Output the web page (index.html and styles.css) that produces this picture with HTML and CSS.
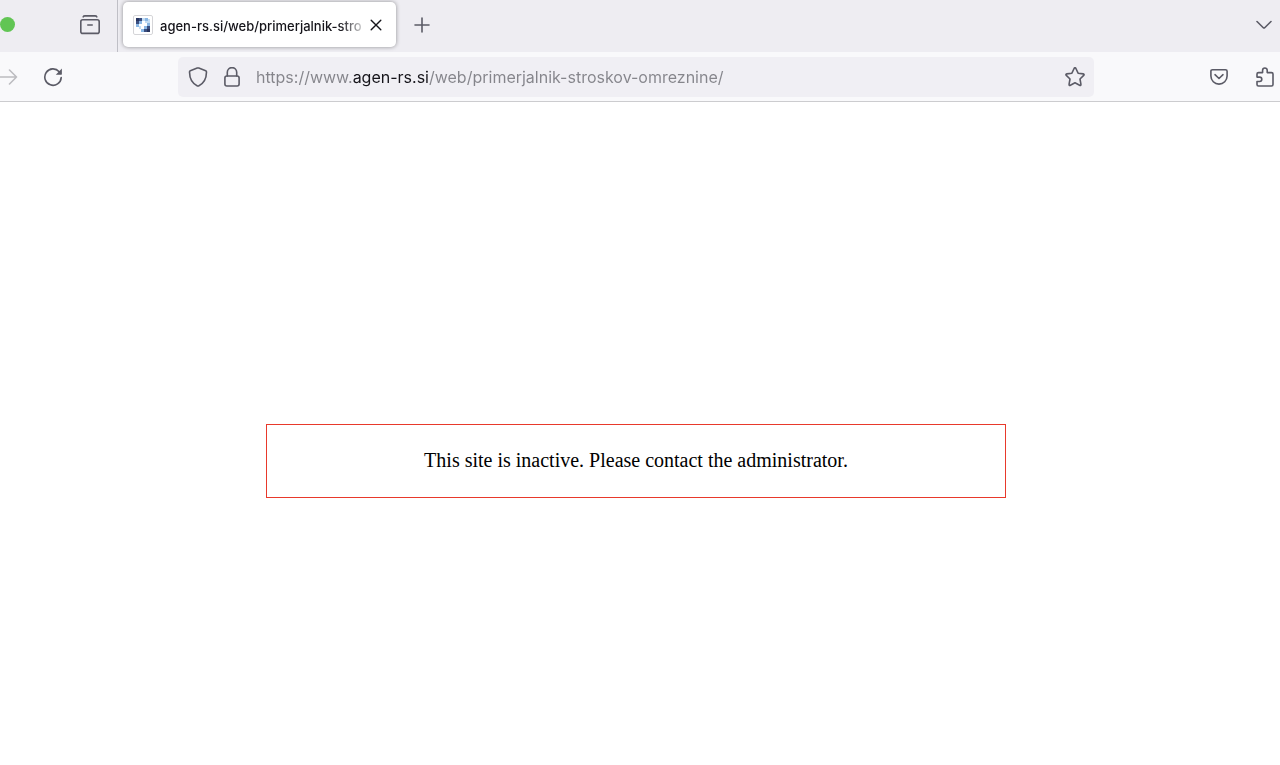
FILE: index.html
```html
<!DOCTYPE html>
<html lang="en">
<head>
    <meta charset="UTF-8">
    <meta name="viewport" content="width=device-width, initial-scale=1.0">
    <title>agen-rs.si/web/primerjalnik-stroskov-omreznine</title>
    <link rel="stylesheet" href="styles.css">
</head>
<body>
    <!-- Tab strip -->
    <header class="tab-strip">
        <div class="window-side">
            <button class="window-dot" aria-label="Zoom window"></button>
            <button class="icon-button" aria-label="Firefox View">
                <svg width="20" height="20" viewBox="0 0 20 20">
                    <path d="M3.2 1.8Q3.6 .9 5 .9h10q1.4 0 1.8.9"/>
                    <rect x=".8" y="4.8" width="18.4" height="13.6" rx="2"/>
                    <path d="M7.8 10h4.4"/>
                </svg>
            </button>
        </div>

        <div class="tab">
            <svg class="favicon" width="20" height="20" viewBox="0 0 20 20">
                <rect class="favicon-frame" x=".5" y=".5" width="19" height="19" rx="1.5"/>
                <path fill="#3b4f80" d="M3 3h6v3H6v3H3zM14 11h3v6h-6v-3h3z"/>
                <path fill="#27345e" d="M3 3h3v3H3zM14 14h3v3h-3z"/>
                <path fill="#8bb8e5" d="M6 6h3v3H6zM12 3h3v3h-3zM3 9h3v3H3zM14 8h3v3h-3zM11 11h3v3h-3zM8 14h3v3H8z"/>
                <path fill="#c4ddf3" d="M9 3h3v3H9zM15 4h2v4h-2zM12 6h3v2h-3zM6 11h2v3H6z"/>
            </svg>
            <span class="tab-title">agen-rs.si/web/primerjalnik-stro</span>
            <button class="icon-button tab-close" aria-label="Close tab">
                <svg width="12" height="12" viewBox="0 0 12 12">
                    <path d="M1.2 1.2l9.6 9.6M10.8 1.2l-9.6 9.6"/>
                </svg>
            </button>
        </div>

        <button class="icon-button new-tab" aria-label="New tab">
            <svg width="16" height="16" viewBox="0 0 16 16">
                <path d="M8 1v14M1 8h14"/>
            </svg>
        </button>
        <button class="icon-button list-tabs" aria-label="List all tabs">
            <svg width="16" height="16" viewBox="0 0 16 16">
                <path d="M1 4.5l6.3 6.2q.7.6 1.4 0L15 4.5"/>
            </svg>
        </button>
    </header>

    <!-- Navigation toolbar -->
    <nav class="toolbar">
        <div class="nav-buttons">
            <button class="icon-button" aria-label="Forward" disabled>
                <svg width="18" height="18" viewBox="0 0 18 18">
                    <path d="M0 9h16.5M9.5 2l7 7-7 7"/>
                </svg>
            </button>
            <button class="icon-button" aria-label="Reload">
                <svg width="20" height="20" viewBox="0 0 20 20">
                    <path d="M16.2 4.7A8.2 8.2 0 1 0 18.2 10.600"/>
                    <path class="solid" d="M18.9 1.6v5.500q0 .6-.6.6h-5.500z"/>
                </svg>
            </button>
        </div>

        <form class="address-bar">
            <button type="button" class="icon-button" aria-label="Tracking protection">
                <svg width="20" height="20" viewBox="0 0 20 20">
                    <path d="M10 .9q.4 0 .8.2l6.9 2.7q.8.3.8 1.2C18.4 11.5 15.2 16.8 10.6 18.9q-.6.3-1.2 0C4.8 16.8 1.6 11.5 1.5 5q0-.9.8-1.2l6.9-2.7q.4-.2.8-.2z"/>
                </svg>
            </button>
            <button type="button" class="icon-button" aria-label="Connection secure">
                <svg width="16" height="20" viewBox="0 0 16 20">
                    <path d="M3.3 9V5.3a4.7 4.7 0 0 1 9.4 0V9"/>
                    <rect x=".9" y="9" width="14.2" height="10" rx="2"/>
                </svg>
            </button>
            <input class="address" type="text" aria-label="Address" spellcheck="false" value="https://www.agen-rs.si/web/primerjalnik-stroskov-omreznine/">
            <button type="button" class="icon-button" aria-label="Bookmark this page">
                <svg width="20" height="20" viewBox="0 0 20 20">
                    <path d="M9.1 1.5q.9-1.5 1.8 0l2.2 4.7 5.1.7q1.5.3.5 1.5l-3.7 3.6.9 5.2q.1 1.6-1.3 1L10 15.8l-4.6 2.4q-1.4.6-1.3-1l.9-5.2L1.3 8.4q-1-1.2.5-1.5l5.1-.7z"/>
                </svg>
            </button>
        </form>

        <div class="extensions">
            <button class="icon-button" aria-label="Save to Pocket">
                <svg width="18" height="18" viewBox="0 0 18 18">
                    <path d="M2.5 1.7h13q1.6 0 1.6 1.6V8a8.1 8.1 0 0 1-16.2 0V3.3q0-1.6 1.6-1.6z"/>
                    <path d="M5 6.7l4 3.8 4-3.8"/>
                </svg>
            </button>
            <button class="icon-button" aria-label="Extensions">
                <svg width="18" height="20" viewBox="0 0 18 20">
                    <path d="M2.5 5.6h4.1V3.3a2.3 2.3 0 0 1 4.6 0v2.3h4.3q1.5 0 1.5 1.5v10.4q0 1.5-1.5 1.5h-13Q1 19 1 17.5v-3h2.6a2.2 2.2 0 0 0 0-4.4H1v-3q0-1.5 1.5-1.5z"/>
                </svg>
            </button>
        </div>
    </nav>

    <!-- Page content -->
    <main class="page">
        <p class="notice">This site is inactive. Please contact the administrator.</p>
    </main>
</body>
</html>
```
FILE: styles.css
```css
* {
    box-sizing: border-box;
}

body {
    margin: 0;
    min-height: 100vh;
    background: #ffffff;
    font-family: Inter, "Liberation Sans", sans-serif;
    color: #15141a;
}

button {
    padding: 0;
    border: none;
    background: none;
    cursor: pointer;
}

.icon-button {
    display: flex;
    flex: none;
    color: #5b5b66;
}

.icon-button:disabled {
    color: #bcbcc0;
}

.icon-button svg {
    fill: none;
    stroke: currentColor;
    stroke-width: 1.6;
    stroke-linecap: round;
    stroke-linejoin: round;
}

.icon-button .solid {
    fill: currentColor;
    stroke: none;
}

/* Tab strip */
.tab-strip {
    display: flex;
    align-items: center;
    height: 52px;
    padding: 0 8px 3px 0;
    background: #eeedf2;
}

.window-side {
    display: flex;
    align-items: center;
    align-self: flex-start;
    justify-content: space-between;
    width: 118px;
    height: 52px;
    padding: 0 17px 3px 0;
    border-right: 1px solid #bfbfc6;
}

.window-dot {
    width: 15px;
    height: 15px;
    border-radius: 50%;
    background: #61c554;
}

.tab {
    display: flex;
    align-items: center;
    width: 273px;
    height: 45px;
    margin: 0 18px 0 5px;
    padding: 0 14px 0 10px;
    border-radius: 5px;
    background: #ffffff;
    box-shadow: 0 0 4px rgba(0, 0, 0, 0.4);
}

.favicon {
    flex: none;
}

.favicon-frame {
    fill: #ffffff;
    stroke: #d5d5d8;
}

/* Long titles fade out before the close button */
.tab-title {
    flex: 1;
    margin: 2px 2px 0 7px;
    overflow: hidden;
    font-size: 13px;
    font-weight: 500;
    line-height: 20px;
    white-space: nowrap;
    -webkit-mask-image: linear-gradient(to left, transparent, #000 28px);
    mask-image: linear-gradient(to left, transparent, #000 28px);
}

.tab-close {
    color: #15141a;
}

.tab-close svg {
    stroke-width: 1.4;
}

.list-tabs {
    margin-left: auto;
}

/* Navigation toolbar */
.toolbar {
    display: flex;
    align-items: center;
    height: 50px;
    background: #f9f9fb;
    border-bottom: 1px solid #cccccf;
}

.nav-buttons {
    display: flex;
    align-items: center;
    gap: 25px;
    width: 178px;
}

.address-bar {
    display: flex;
    flex: 1;
    align-items: center;
    gap: 16px;
    height: 40px;
    padding: 0 9px 0 10px;
    border-radius: 5px;
    background: #f0eff4;
}

/* The host part of the address is darker than the rest */
.address {
    flex: 1;
    min-width: 0;
    height: 24px;
    padding: 0;
    border: none;
    outline: none;
    background: linear-gradient(to right, #85858b 96px, #15141a 96px, #15141a 173px, #85858b 173px);
    -webkit-background-clip: text;
    background-clip: text;
    color: transparent;
    font-family: inherit;
    font-size: 16px;
}

.extensions {
    display: flex;
    align-items: center;
    justify-content: flex-end;
    gap: 28px;
    width: 186px;
    padding-right: 6px;
}

/* Page content */
.page {
    padding: 322px 8px 0 0;
}

.notice {
    width: 740px;
    max-width: 100%;
    margin: 0 auto;
    padding: 23px 24px 25px;
    border: 1px solid #e8392b;
    color: #000000;
    font-family: "Liberation Serif", serif;
    font-size: 20px;
    line-height: 24px;
    text-align: center;
}
```
